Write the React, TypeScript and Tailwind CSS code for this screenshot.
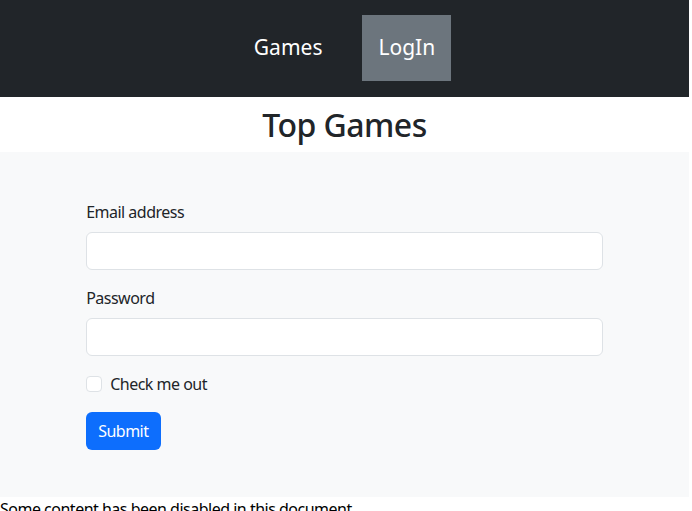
export default function App() {
  return (
    <div className="w-[689px] bg-white font-['Noto_Sans',sans-serif] text-[#212529]">
      {/* Navbar */}
      <nav className="flex items-start justify-center gap-6 bg-[#212529] pt-[15px] pb-4">
        <a href="#" className="flex h-[66px] items-center px-4 text-[21px] text-white">
          Games
        </a>
        <a href="#" className="flex h-[66px] items-center bg-[#6c757d] px-4 text-[21px] text-white">
          LogIn
        </a>
      </nav>

      <h2 className="pt-[9px] pb-2 text-center text-[32px] leading-[38px] font-medium tracking-[-0.55px]">
        Top Games
      </h2>

      <section className="bg-[#f8f9fa] pt-12 pb-[47px]">
        <form className="mx-auto w-3/4 text-[16px] leading-6 tracking-[-0.5px]">
          <div className="mb-4">
            <label className="mb-2 block">Email address</label>
            <input
              type="email"
              className="block h-[38px] w-full rounded-md border border-[#dee2e6] bg-white px-3"
            />
          </div>
          <div className="mb-4">
            <label className="mb-2 block">Password</label>
            <input
              type="password"
              className="block h-[38px] w-full rounded-md border border-[#dee2e6] bg-white px-3"
            />
          </div>
          <div className="mb-4 flex h-6 items-center gap-2">
            <span className="block h-4 w-4 rounded-[4px] border border-[#dee2e6] bg-white" />
            <span>Check me out</span>
          </div>
          <button
            type="button"
            className="h-[38px] rounded-md bg-[#0d6efd] px-3 text-white"
          >
            Submit
          </button>
        </form>
      </section>

      <p className="text-[16px] leading-6 tracking-[-0.5px] text-black">
        Some content has been disabled in this document
      </p>
    </div>
  );
}
